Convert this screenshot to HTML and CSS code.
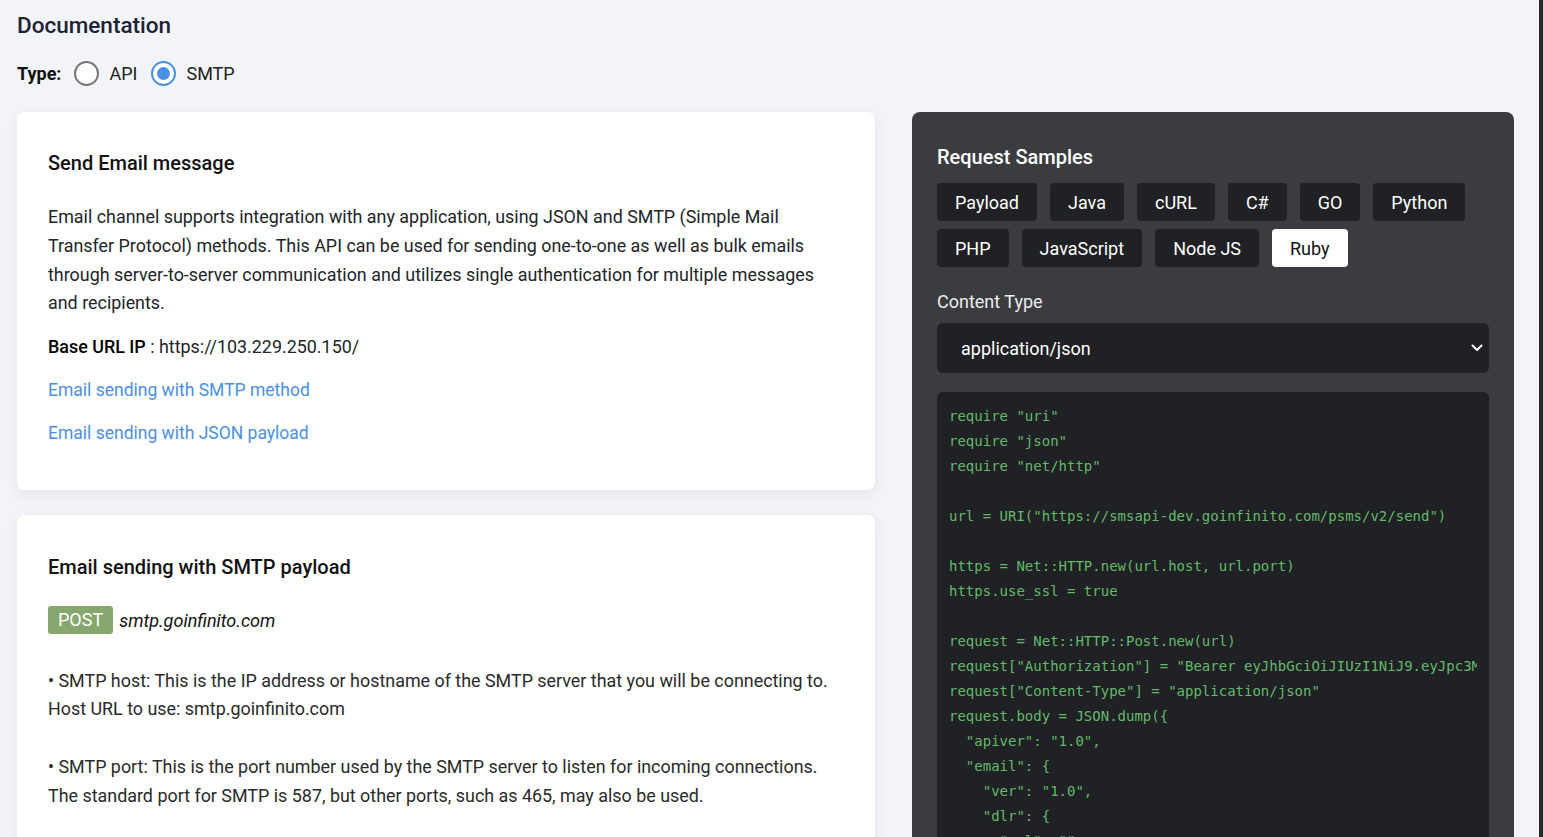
FILE: index.html
```html
<!DOCTYPE html>
<html lang="en">
<head>
<meta charset="utf-8">
<title>Documentation</title>
<link rel="stylesheet" href="styles.css">
</head>
<body>
<div class="page">
  <main class="main">
    <h1 class="title">Documentation</h1>
    <div class="type-row">
      <span class="type-label">Type:</span>
      <label class="radio"><span class="radio-dot"></span><span>API</span></label>
      <label class="radio"><span class="radio-dot checked"></span><span>SMTP</span></label>
    </div>
    <div class="columns">
      <div class="left">
        <section class="card card-intro">
          <h2 class="card-title">Send Email message</h2>
          <p class="text">Email channel supports integration with any application, using JSON and SMTP (Simple Mail Transfer Protocol) methods. This API can be used for sending one-to-one as well as bulk emails through server-to-server communication and utilizes single authentication for multiple messages and recipients.</p>
          <p class="text base"><strong class="strong">Base URL IP</strong> : https://103.229.250.150/</p>
          <a class="link" href="#smtp">Email sending with SMTP method</a>
          <a class="link" href="#json">Email sending with JSON payload</a>
        </section>
        <section class="card card-tall">
          <h2 class="card-title">Email sending with SMTP payload</h2>
          <div class="endpoint"><span class="badge">POST</span><em class="host">smtp.goinfinito.com</em></div>
          <p class="text bullets">• SMTP host: This is the IP address or hostname of the SMTP server that you will be connecting to.<br>Host URL to use: smtp.goinfinito.com<br><br>• SMTP port: This is the port number used by the SMTP server to listen for incoming connections.<br>The standard port for SMTP is 587, but other ports, such as 465, may also be used.<br><br>• SMTP username: This is the username used to authenticate with the SMTP server.</p>
        </section>
      </div>
      <aside class="panel">
        <h2 class="panel-title">Request Samples</h2>
        <div class="tabs">
          <button class="tab">Payload</button>
          <button class="tab">Java</button>
          <button class="tab">cURL</button>
          <button class="tab">C#</button>
          <button class="tab">GO</button>
          <button class="tab">Python</button>
          <button class="tab">PHP</button>
          <button class="tab">JavaScript</button>
          <button class="tab">Node JS</button>
          <button class="tab active">Ruby</button>
        </div>
        <div class="ct-label">Content Type</div>
        <div class="select">
          <span>application/json</span>
          <svg class="chev" width="12" height="8" viewBox="0 0 12 8"><polyline points="1.5,1.5 6,6 10.5,1.5" fill="none" stroke="#ffffff" stroke-width="2" stroke-linecap="round" stroke-linejoin="round"/></svg>
        </div>
        <div class="code">
<pre class="pre">require "uri"
require "json"
require "net/http"

url = URI("https://smsapi-dev.goinfinito.com/psms/v2/send")

https = Net::HTTP.new(url.host, url.port)
https.use_ssl = true

request = Net::HTTP::Post.new(url)
request["Authorization"] = "Bearer eyJhbGciOiJIUzI1NiJ9.eyJpc3MiOiJJbmZpbml0byIsImlhdCI6MTY4"
request["Content-Type"] = "application/json"
request.body = JSON.dump({
  "apiver": "1.0",
  "email": {
    "ver": "1.0",
    "dlr": {
      "url": ""
    },
    "messages": [</pre>
        </div>
      </aside>
    </div>
  </main>
  <div class="edge"></div>
</div>
</body>
</html>
```

FILE: styles.css
```css
* { box-sizing: border-box; }
html, body { margin: 0; padding: 0; }
body {
  background: #f3f4f8;
  font-family: Roboto, "Liberation Sans", Arial, sans-serif;
  color: #212529;
  height: 837px;
  overflow: hidden;
}
.page {
  display: flex;
  height: 837px;
}
.main {
  flex: 1;
  padding: 10px 25px 0 17px;
  min-width: 0;
}
.edge {
  width: 4px;
  background: #2a2b2e;
  flex: none;
}
.title {
  margin: 0;
  font-size: 22.5px;
  line-height: 30px;
  font-weight: 500;
  color: #1e2235;
}
.type-row {
  display: flex;
  align-items: center;
  height: 30px;
  margin-top: 18px;
  font-size: 18px;
}
.type-label {
  font-weight: 700;
  color: #111;
  margin-right: 13px;
}
.radio {
  display: flex;
  align-items: center;
  gap: 10px;
  margin-right: 14px;
  color: #222;
}
.radio-dot {
  width: 25px;
  height: 25px;
  border-radius: 50%;
  border: 2px solid #767676;
  display: inline-block;
  background: #fff;
  position: relative;
}
.radio-dot.checked {
  border-color: #4a90e2;
}
.radio-dot.checked::after {
  content: "";
  position: absolute;
  left: 4px;
  top: 4px;
  width: 13px;
  height: 13px;
  border-radius: 50%;
  background: #4a90e2;
}
.columns {
  display: flex;
  gap: 37px;
  margin-top: 24px;
  align-items: flex-start;
}
.left {
  width: 858px;
  flex: none;
  display: flex;
  flex-direction: column;
  gap: 25px;
}
.card {
  background: #fff;
  border-radius: 8px;
  box-shadow: 0 4px 14px rgba(40, 50, 90, 0.08);
  padding: 39px 31px 45px;
  display: flex;
  flex-direction: column;
  align-items: flex-start;
}
.card-intro {
  padding-bottom: 42px;
}
.card-title {
  margin: 0 0 28px;
  font-size: 20px;
  line-height: 24px;
  font-weight: 500;
  color: #111;
}
.card-tall .card-title {
  margin-bottom: 27px;
}
.card-tall {
  padding-top: 40px;
}
.text {
  margin: 0;
  font-size: 17.9px;
  line-height: 28.8px;
  color: #212529;
}
.base {
  margin-top: 15px;
}
.strong {
  font-weight: 500;
  color: #000;
}
.link {
  margin-top: 14px;
  font-size: 17.5px;
  line-height: 28.8px;
  color: #4a90e2;
  text-decoration: none;
}
.endpoint {
  display: flex;
  align-items: center;
  gap: 6px;
  height: 29px;
  margin-bottom: 32px;
}
.badge {
  background: #86a86e;
  color: #fff;
  font-size: 18px;
  line-height: 28px;
  padding: 0 10px;
  border-radius: 3px;
}
.host {
  font-size: 18px;
  color: #111;
}
.bullets {
  color: #2a2a2a;
}
.panel {
  width: 602px;
  flex: none;
  min-width: 0;
  background: #3b3c3f;
  border-radius: 8px;
  padding: 33px 25px 40px;
  min-height: 760px;
}
.panel-title {
  margin: 0;
  font-size: 20px;
  line-height: 24px;
  font-weight: 500;
  color: #fff;
}
.tabs {
  display: flex;
  flex-wrap: wrap;
  gap: 8px 13px;
  margin-top: 14px;
}
.tab {
  height: 38px;
  padding: 0 18px;
  border: none;
  border-radius: 4px;
  background: #202124;
  color: #fff;
  font-family: Roboto, "Liberation Sans", Arial, sans-serif;
  font-size: 18px;
  cursor: pointer;
}
.tab.active {
  background: #fff;
  color: #111;
}
.ct-label {
  margin-top: 23px;
  font-size: 18px;
  line-height: 24px;
  color: #ececec;
}
.select {
  margin-top: 9px;
  height: 50px;
  background: #202124;
  border-radius: 6px;
  display: flex;
  align-items: center;
  justify-content: space-between;
  padding: 0 6px 0 24px;
  color: #fff;
  font-size: 18px;
}
.chev {
  display: block;
}
.code {
  margin-top: 19px;
  background: #202124;
  border-radius: 6px;
  padding: 12px 12px 20px;
  min-width: 0;
}
.pre {
  margin: 0;
  overflow: hidden;
  font-family: "DejaVu Sans Mono", "Liberation Mono", monospace;
  font-size: 14px;
  line-height: 25px;
  color: #63b96b;
  white-space: pre;
}
```
